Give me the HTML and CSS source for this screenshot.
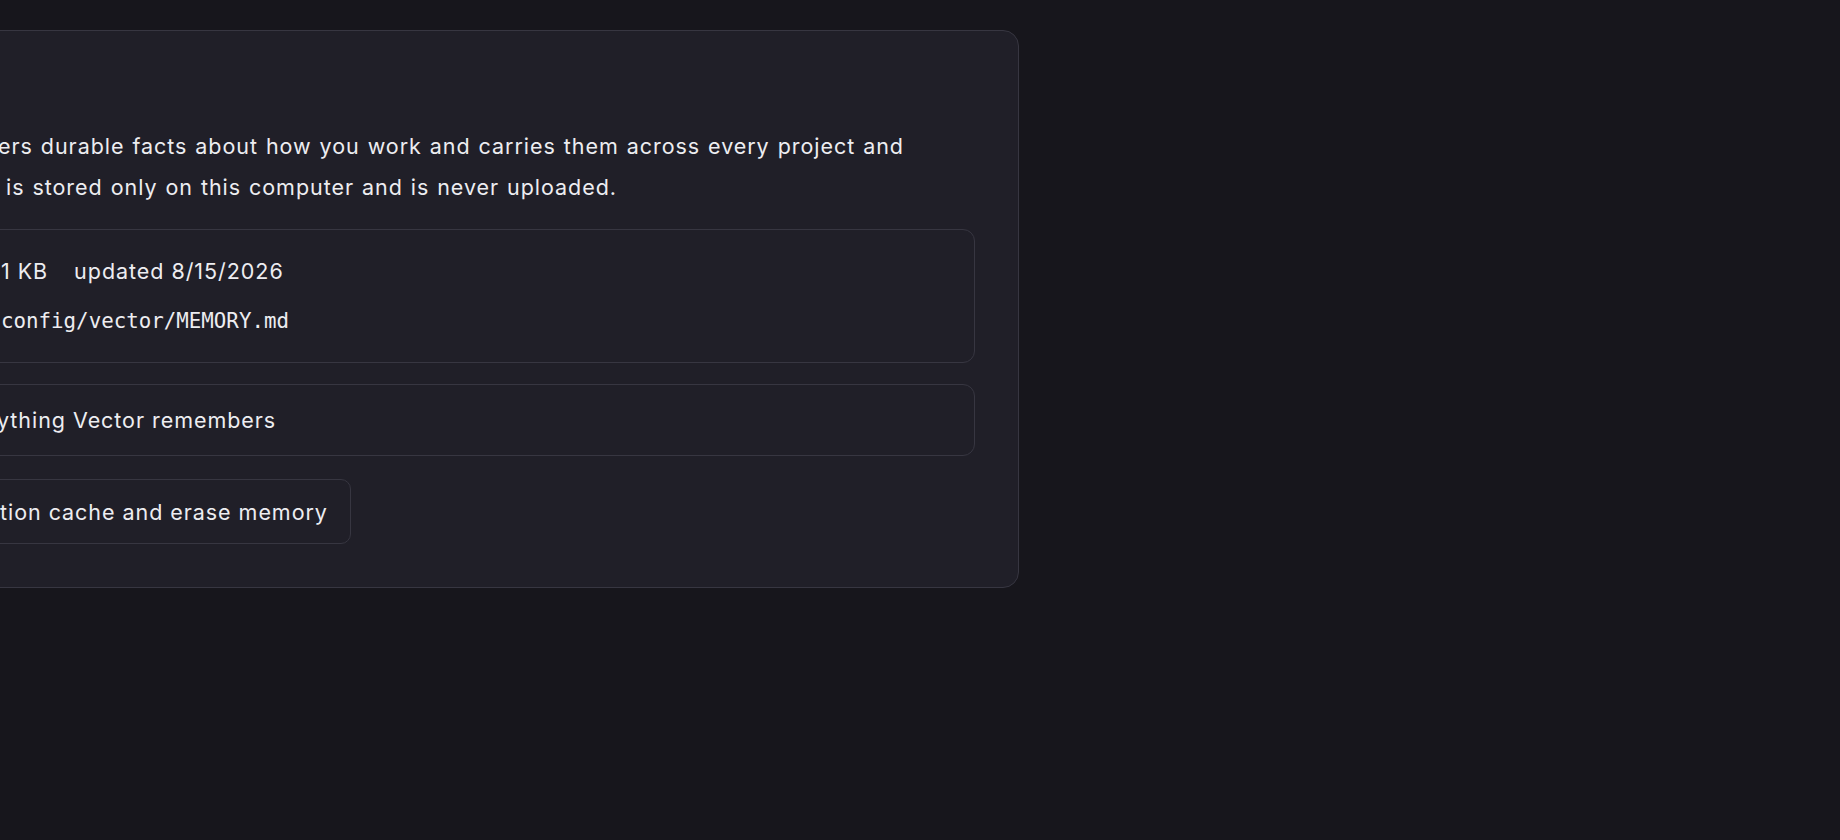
FILE: index.html
```html
<!DOCTYPE html>
<html lang="en">
<head>
<meta charset="utf-8">
<title>Memory settings</title>
<link rel="stylesheet" href="styles.css">
</head>
<body>
<main class="page">
  <section class="card">
    <p class="desc">
      <span class="desc-line">ers durable facts about how you work and carries them across every project and</span>
      <span class="desc-line">&nbsp;is stored only on this computer and is never uploaded.</span>
    </p>
    <div class="file-box">
      <div class="meta">
        <span>1 KB</span>
        <span>updated 8/15/2026</span>
      </div>
      <div class="path">config/vector/MEMORY.md</div>
    </div>
    <div class="toggle-box">
      <span class="toggle-label">ything Vector remembers</span>
    </div>
    <button class="danger-btn" type="button"><span class="btn-label">tion cache and erase memory</span></button>
  </section>
</main>
</body>
</html>
```

FILE: styles.css
```css
* { box-sizing: border-box; }

html, body {
  margin: 0;
  padding: 0;
  background: #17161c;
  color: #ededf1;
  font-family: Inter, "Noto Sans", "Liberation Sans", sans-serif;
  font-size: 21.5px;
  letter-spacing: 0.95px;
  overflow: hidden;
}

.page {
  width: 1840px;
  height: 840px;
  padding-top: 30px;
  overflow: hidden;
}

.card {
  width: 1089px;
  margin-left: -70px;
  background: #201f28;
  border: 1px solid #373641;
  border-radius: 16px;
  padding: 95px 43px 43px;
  display: flex;
  flex-direction: column;
  align-items: stretch;
}

.desc {
  margin: 0 0 21px;
  padding-left: 24px;
  line-height: 41px;
  word-spacing: 1px;
  white-space: nowrap;
}

.desc-line { display: block; }

.file-box {
  border: 1px solid #373641;
  border-radius: 12px;
  padding: 26px 26px;
  margin-bottom: 21px;
}

.meta {
  display: flex;
  gap: 26px;
  line-height: 30px;
}

.path {
  margin-top: 19.5px;
  line-height: 30px;
  font-family: "DejaVu Sans Mono", "Liberation Mono", monospace;
  font-size: 20.8px;
  letter-spacing: 0;
}

.toggle-box {
  border: 1px solid #373641;
  border-radius: 12px;
  padding: 20.3px 26px;
  line-height: 30px;
  margin-bottom: 23px;
}

.toggle-label {
  display: block;
  text-indent: -4px;
}

.danger-btn {
  align-self: flex-start;
  width: 377px;
  background: #201f28;
  color: #ededf1;
  border: 1px solid #373641;
  border-radius: 10px;
  padding: 16.7px 22px 16.7px 26px;
  font-family: inherit;
  font-size: 21.5px;
  letter-spacing: 0.95px;
  line-height: 30px;
  text-align: left;
  white-space: nowrap;
}

.btn-label {
  display: block;
  text-indent: -1px;
}
```
